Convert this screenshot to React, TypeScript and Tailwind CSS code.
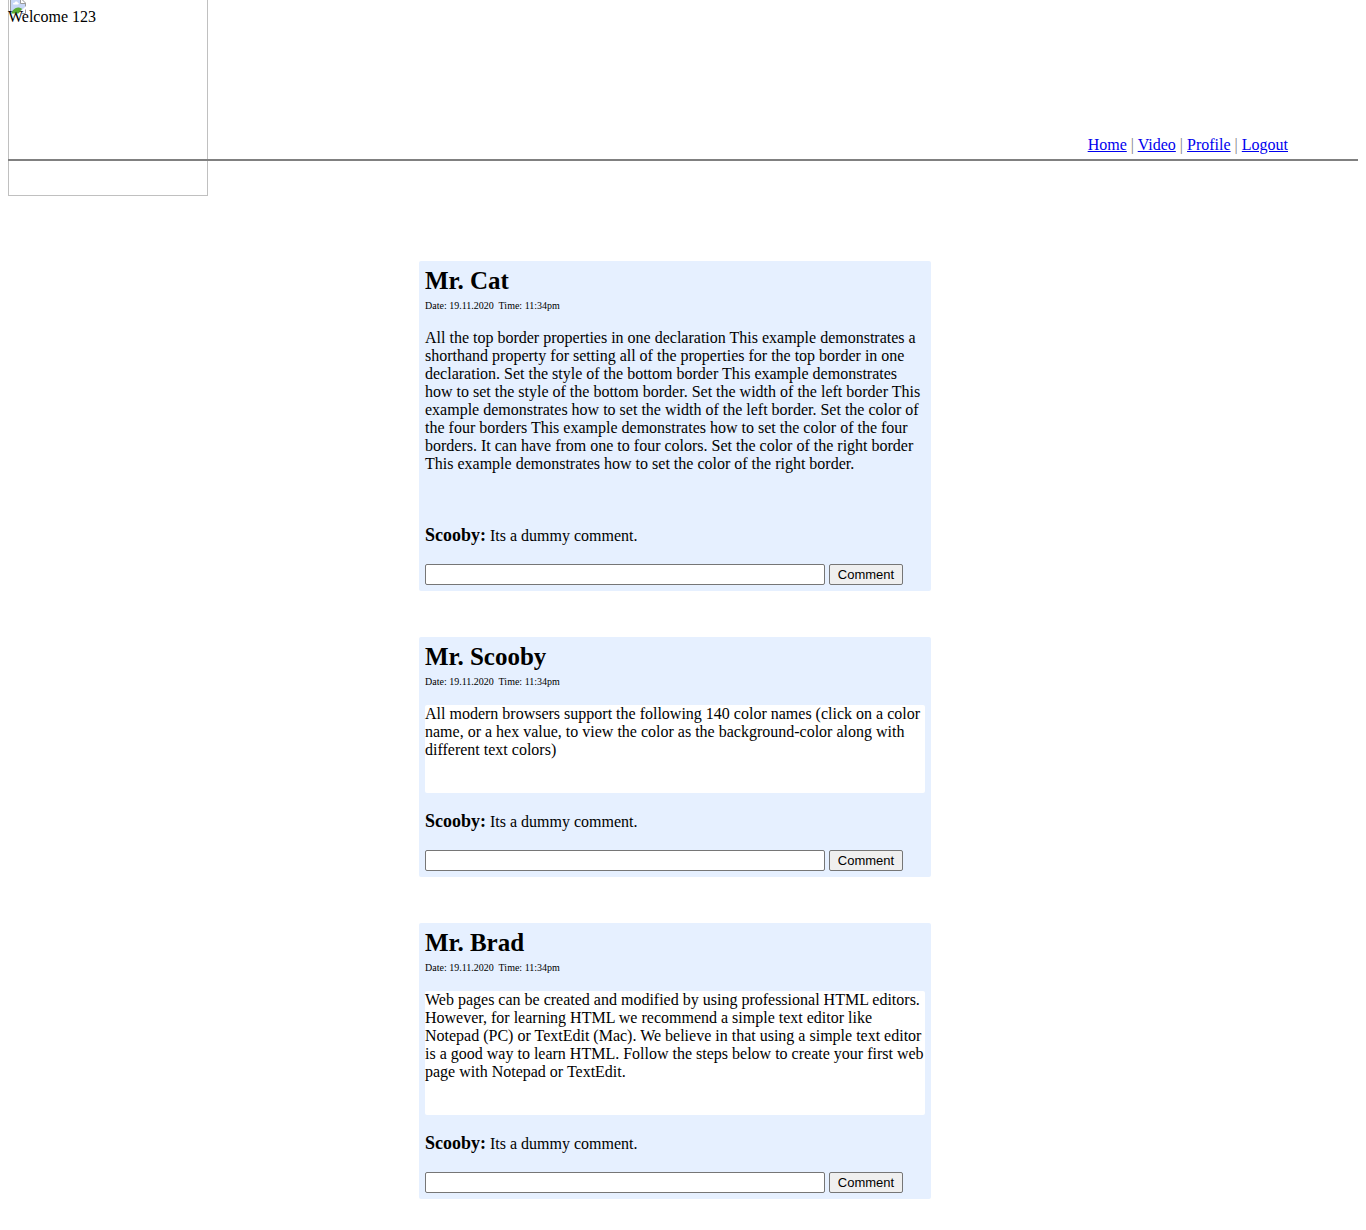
type Post = { id: string; author: string; text: string; plain?: boolean };

const posts: Post[] = [
  {
    id: "cat",
    author: "Mr. Cat",
    plain: true,
    text: "All the top border properties in one declaration This example demonstrates a shorthand property for setting all of the properties for the top border in one declaration. Set the style of the bottom border This example demonstrates how to set the style of the bottom border. Set the width of the left border This example demonstrates how to set the width of the left border. Set the color of the four borders This example demonstrates how to set the color of the four borders. It can have from one to four colors. Set the color of the right border This example demonstrates how to set the color of the right border.",
  },
  {
    id: "scooby",
    author: "Mr. Scooby",
    text: "All modern browsers support the following 140 color names (click on a color name, or a hex value, to view the color as the background-color along with different text colors)",
  },
  {
    id: "brad",
    author: "Mr. Brad",
    text: "Web pages can be created and modified by using professional HTML editors. However, for learning HTML we recommend a simple text editor like Notepad (PC) or TextEdit (Mac). We believe in that using a simple text editor is a good way to learn HTML. Follow the steps below to create your first web page with Notepad or TextEdit.",
  },
];

const links = ["Home", "Video", "Profile", "Logout"];

function BrokenImageIcon() {
  return (
    <svg width="16" height="16" viewBox="0 0 16 16" aria-hidden="true">
      <path d="M1 1h10l4 4v4L9 15H1z" fill="#c6d6f6" />
      <path d="M3 6c0-1 1-1.500 1.700-1.200C5 3.200 7.500 3.200 7.800 4.800c1.200 0 1.400 1.700 0 1.700H3.500z" fill="#fff" />
      <path d="M1 15.500c1.500-3.500 4-6 7-6 1.500 0 3 .5 4 1.500L8.500 15.500z" fill="#5aab35" />
      <path d="M11 1v4h4z" fill="#fff" />
      <path d="M.5 15V.5H11L15.500 5v3.500M10.500 1v4.500H15M15.500 11.500v4H12" fill="none" stroke="#9a9a9a" />
    </svg>
  );
}

function PostCard({ post }: { post: Post }) {
  return (
    <article className="w-full max-w-[512px] rounded-xs bg-[#e6f0ff] p-[6px]">
      <h2 className="text-[25px] leading-[27px] font-bold">{post.author}</h2>
      <p className="mt-[6px] text-[10px] leading-[12px] whitespace-pre">{"Date: 19.11.2020  Time: 11:34pm"}</p>
      <p className={post.plain ? "mt-[17px] pb-[34px]" : "mt-[17px] rounded-xs bg-white pb-[34px]"}>{post.text}</p>
      <p className="mt-5">
        <b className="text-[18px] leading-[16px]">Scooby:</b> Its a dummy comment.
      </p>
      <form className="mt-[19px] flex gap-1" onSubmit={(e) => e.preventDefault()}>
        <input
          type="text"
          aria-label={"Comment on the post by " + post.author}
          className="h-[21px] w-[400px] min-w-0 rounded-xs border border-[#767676] bg-white px-1 text-[13px]"
        />
        <button
          type="submit"
          className="h-[21px] w-[74px] shrink-0 rounded-xs border border-[#767676] bg-[#efefef] text-center font-['Liberation_Sans',sans-serif] text-[13px] leading-[19px]"
        >
          Comment
        </button>
      </form>
    </article>
  );
}

export default function App() {
  return (
    <div className="px-2 pb-8 font-['Liberation_Serif',serif] text-[16px] leading-[18px] text-black">
      <header className="relative flex h-[161px] flex-col justify-between border-b-2 border-[#808080] pt-2">
        <div
          role="img"
          aria-label="Logo"
          className="absolute top-0 left-0 -z-10 h-[196px] w-[200px] overflow-hidden border border-t-0 border-[#c0c0c0] pl-px"
        >
          <div className="-mt-[2px]">
            <BrokenImageIcon />
          </div>
        </div>
        <p>Welcome 123</p>
        <nav className="mr-[70px] mb-[5px] self-end">
          {links.map((label, i) => (
            <span key={label} className="text-[#808080]">
              {i > 0 && " | "}
              <a href="#" className="text-[#0000ee] underline">
                {label}
              </a>
            </span>
          ))}
        </nav>
      </header>
      <main className="flex flex-col items-center gap-[46px] pt-[100px] pr-4">
        {posts.map((post) => (
          <PostCard key={post.id} post={post} />
        ))}
      </main>
    </div>
  );
}
